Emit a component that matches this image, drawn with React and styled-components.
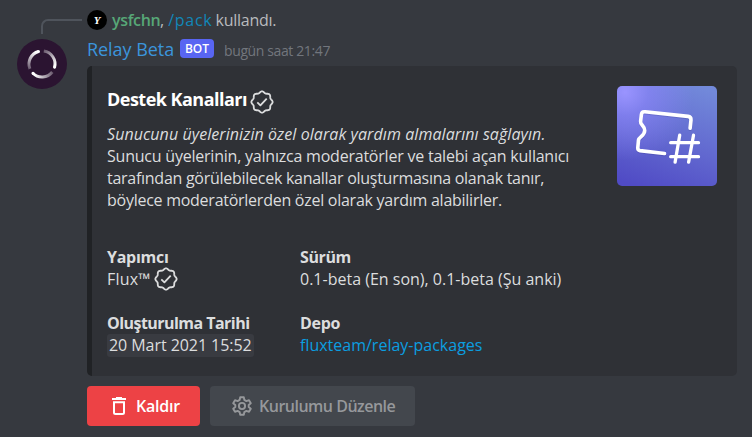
import React from "react";
import styled, { createGlobalStyle, css } from "styled-components";

const GlobalStyle = createGlobalStyle`
  * { box-sizing: border-box; }
  body {
    margin: 0;
    background: #36393f;
    color: #dcddde;
    font: 400 16px/22px "Open Sans", "Noto Sans", sans-serif;
    overflow: hidden;
  }
  svg { display: block; flex: none; }
`;

const Message = styled.article`
  display: grid;
  grid-template-columns: 70px 650px;
  grid-template-rows: 20px auto;
  row-gap: 8px;
  padding: 10px 15px 11px 17px;
  min-height: 437px;
`;

const SpineCell = styled.div`
  padding: 9px 5px 0 24px;
`;

const ReplySpine = styled.div`
  height: 15px;
  border: solid #4f545c;
  border-width: 2px 0 0 2px;
  border-top-left-radius: 7px;
`;

const ReplyLine = styled.div`
  display: flex;
  align-items: center;
  height: 20px;
  line-height: 20px;
  white-space: pre;
  color: #b9bbbe;
`;

const SmallAvatar = styled.span`
  display: grid;
  place-items: center;
  width: 20px;
  height: 20px;
  margin-right: 5px;
  border-radius: 50%;
  background: #000;
  color: #fff;
  font: italic 700 11px/20px "Liberation Serif", serif;
`;

const ReplyUser = styled.span`
  width: 48px;
  color: #57a777;
  font-weight: 600;
  letter-spacing: -0.35px;
`;

const Command = styled.span`
  margin-left: 4px;
  color: #1187b8;
  letter-spacing: 0.75px;
`;

const ReplyText = styled.span`
  margin-left: 3px;
  letter-spacing: -0.25px;
`;

const Avatar = styled.div`
  display: grid;
  place-items: center;
  width: 50px;
  height: 50px;
  margin-top: 1px;
  border-radius: 50%;
  background: #2b1431;
`;

const Header = styled.header`
  display: flex;
  height: 22px;
  line-height: 22px;
  white-space: nowrap;
`;

const Author = styled.span`
  width: 93px;
  color: #3b95dc;
  font-size: 18px;
  font-weight: 500;
  letter-spacing: -0.05px;
`;

const BotTag = styled.span`
  width: 34px;
  height: 19px;
  margin-top: 1px;
  border-radius: 4px;
  background: #5865f2;
  color: #fff;
  font-size: 12px;
  font-weight: 600;
  line-height: 19px;
  text-align: center;
`;

const Timestamp = styled.time`
  margin: 2px 0 0 10px;
  color: #72767d;
  font-size: 14px;
  letter-spacing: -0.38px;
`;

const Embed = styled.section`
  height: 310px;
  margin-top: 6px;
  padding: 20px 20px 20px 15px;
  border-left: 5px solid #202225;
  border-radius: 5px;
  background: #2f3136;
`;

const EmbedTop = styled.div`
  display: flex;
  justify-content: space-between;
  height: 125px;
`;

const Title = styled.h1`
  display: flex;
  align-items: center;
  gap: 3px;
  height: 26px;
  margin: 0 0 11px;
  color: #fff;
  font-size: 18px;
  font-weight: 700;
  line-height: 26px;
  letter-spacing: -0.52px;

  svg { margin-top: 5px; }
`;

const Line = styled.div`
  white-space: nowrap;
  letter-spacing: ${(p) => p.$track || 0}px;
  ${(p) => p.$italic && css`font-style: italic;`}
`;

const Thumb = styled.div`
  width: 100px;
  height: 100px;
  border-radius: 5px;
  background:
    radial-gradient(circle at 8% 6%, #9a94ff 0%, rgba(140, 134, 250, 0.65) 18%, rgba(120, 130, 230, 0) 52%),
    linear-gradient(20deg, #504bc5 5%, #6167cf 45%, #7289da 95%);
`;

const Fields = styled.dl`
  display: grid;
  grid-template-columns: 193px 1fr;
  row-gap: 22px;
  margin: 35px 0 0;
`;

const FieldName = styled.dt`
  height: 22px;
  font-weight: 700;
  white-space: nowrap;
  letter-spacing: ${(p) => p.$track || 0}px;
`;

const FieldValue = styled.dd`
  display: flex;
  align-items: center;
  height: 22px;
  margin: 0;
  white-space: nowrap;
  letter-spacing: ${(p) => p.$track || 0}px;

  svg { margin-left: 3px; }
`;

const DateChip = styled.time`
  width: 147px;
  height: 23px;
  padding-left: 2px;
  border-radius: 3px;
  background: #393b41;
  letter-spacing: -0.06px;
`;

const Link = styled.a`
  color: #0b9ee0;
`;

const Actions = styled.div`
  display: flex;
  gap: 10px;
  margin-top: 10px;
`;

const Button = styled.button`
  display: flex;
  align-items: center;
  gap: 5px;
  width: ${(p) => p.$width}px;
  height: 40px;
  padding: 0 0 0 20px;
  border: 0;
  border-radius: 4px;
  background: ${(p) => (p.$danger ? "#ed4245" : "#43474d")};
  color: ${(p) => (p.$danger ? "#fff" : "#96989b")};
  font: 600 16px/22px "Open Sans", sans-serif;
  letter-spacing: ${(p) => p.$track}px;
  white-space: nowrap;
`;

const rosette = Array.from({ length: 96 }, (_, i) => {
  const a = (i / 96) * Math.PI * 2;
  const r = 9.9 + 0.75 * Math.cos(8 * a);
  return `${(12 + r * Math.sin(a)).toFixed(2)},${(12 - r * Math.cos(a)).toFixed(2)}`;
}).join(" ");

function VerifiedIcon() {
  return (
    <svg width="24" height="24" viewBox="0 0 24 24" fill="none" stroke="#dcddde" strokeLinejoin="round">
      <polygon points={rosette} strokeWidth="1.8" />
      <path d="M7.3 12.3l3.1 3 6.3-6.6" strokeWidth="1.8" />
    </svg>
  );
}

function RelayLogo() {
  return (
    <svg width="32" height="32" viewBox="0 0 32 32" fill="none" strokeWidth="3">
      <defs>
        <linearGradient id="arc" gradientUnits="userSpaceOnUse" x1="3.5" y1="21" x2="10" y2="4">
          <stop offset="0" stopColor="#fff" stopOpacity=".3" />
          <stop offset="1" stopColor="#fff" />
        </linearGradient>
      </defs>
      {[0, 120, 240].map((turn) => (
        <g key={turn} transform={`rotate(${turn} 16 16)`}>
          <path d="M3.9 20.9A13 13 0 0 1 12.5 3.5" stroke="url(#arc)" />
          <circle cx="12.5" cy="3.5" r="1.5" fill="#fff" />
        </g>
      ))}
    </svg>
  );
}

function TicketArt() {
  return (
    <svg width="100" height="100" viewBox="0 0 100 100" fill="none" stroke="#fff" strokeWidth="3.6" strokeLinecap="round" strokeLinejoin="round">
      <g opacity=".15" stroke="#202060" transform="translate(0 1)">
        <path d="M47.5 67.5L23 64.6Q20.5 64.2 20.8 61.5L21.5 54C22 50.5 27.7 50 27.7 44.5C27.7 39.5 23.2 39 23.6 35.5L24.4 28.5Q24.8 25.4 28 25.8L71 30.4Q74.2 30.8 74 34L73.1 42.3" />
      </g>
      <path d="M47.5 67.5L23 64.6Q20.5 64.2 20.8 61.5L21.5 54C22 50.5 27.7 50 27.7 44.5C27.7 39.5 23.2 39 23.6 35.5L24.4 28.5Q24.8 25.4 28 25.8L71 30.4Q74.2 30.8 74 34L73.1 42.3" />
      <path d="M62.7 49.2L58.1 76.2M76.5 49.2L71.6 76.2M53.7 56.7H81.5M53.7 70.7H81.5" strokeWidth="3.3" />
    </svg>
  );
}

function TrashIcon() {
  return (
    <svg width="24" height="24" viewBox="0 0 24 24" fill="none" stroke="#fff" strokeWidth="2">
      <path d="M5 5H19M9 4H15M7 8.2H17V18.5Q17 20 15.5 20H8.5Q7 20 7 18.5Z" />
    </svg>
  );
}

function GearIcon() {
  return (
    <svg width="24" height="24" viewBox="0 0 24 24" fill="none" stroke="#96989b" strokeWidth="1.9" strokeLinejoin="round">
      <path d="M10.2 3.2H13.8L14.3 5.9L16.4 7.1L19 6.2L20.8 9.3L18.7 11V13L20.8 14.7L19 17.8L16.4 16.9L14.3 18.1L13.8 20.8H10.2L9.7 18.1L7.6 16.9L5 17.8L3.2 14.7L5.3 13V11L3.2 9.3L5 6.2L7.6 7.1L9.7 5.9Z" />
      <circle cx="12" cy="12" r="3.1" />
    </svg>
  );
}

export default function App() {
  return (
    <>
      <GlobalStyle />
      <Message>
        <SpineCell><ReplySpine /></SpineCell>
        <ReplyLine>
          <SmallAvatar>Y</SmallAvatar>
          <ReplyUser>ysfchn</ReplyUser>,<Command>/pack</Command>
          <ReplyText>kullandı.</ReplyText>
        </ReplyLine>
        <Avatar><RelayLogo /></Avatar>
        <div>
          <Header>
            <Author>Relay Beta</Author>
            <BotTag>BOT</BotTag>
            <Timestamp>bugün saat 21:47</Timestamp>
          </Header>
          <Embed>
            <EmbedTop>
              <div>
                <Title>Destek Kanalları<VerifiedIcon /></Title>
                <Line $italic $track={0.07}>Sunucunu üyelerinizin özel olarak yardım almalarını sağlayın.</Line>
                <Line $track={-0.22}>Sunucu üyelerinin, yalnızca moderatörler ve talebi açan kullanıcı</Line>
                <Line $track={-0.27}>tarafından görülebilecek kanallar oluşturmasına olanak tanır,</Line>
                <Line $track={-0.26}>böylece moderatörlerden özel olarak yardım alabilirler.</Line>
              </div>
              <Thumb><TicketArt /></Thumb>
            </EmbedTop>
            <Fields>
              <div>
                <FieldName $track={-0.28}>Yapımcı</FieldName>
                <FieldValue $track={0.2}>Flux™<VerifiedIcon /></FieldValue>
              </div>
              <div>
                <FieldName $track={-0.4}>Sürüm</FieldName>
                <FieldValue>0.1-beta (En son), 0.1-beta (Şu anki)</FieldValue>
              </div>
              <div>
                <FieldName $track={-0.54}>Oluşturulma Tarihi</FieldName>
                <FieldValue><DateChip>20 Mart 2021 15:52</DateChip></FieldValue>
              </div>
              <div>
                <FieldName $track={-0.3}>Depo</FieldName>
                <FieldValue><Link>fluxteam/relay-packages</Link></FieldValue>
              </div>
            </Fields>
          </Embed>
          <Actions>
            <Button $danger $width={113} $track={-0.25}><TrashIcon />Kaldır</Button>
            <Button $width={205} $track={-0.5}><GearIcon />Kurulumu Düzenle</Button>
          </Actions>
        </div>
      </Message>
    </>
  );
}
